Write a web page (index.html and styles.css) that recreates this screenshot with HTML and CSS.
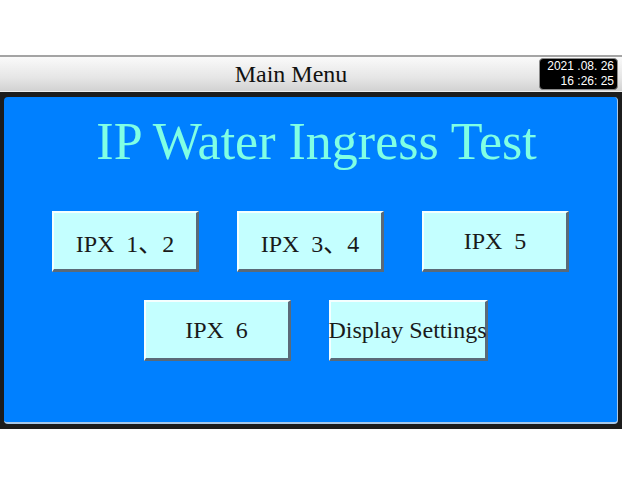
FILE: index.html
```html
<!DOCTYPE html>
<html>
<head>
<meta charset="utf-8">
<link rel="stylesheet" href="styles.css">
</head>
<body>
<div class="screen">
  <div class="topline"></div>
  <div class="header">
    <div class="title-bar">Main Menu</div>
    <div class="clock">
      <div>2021 .08. 26</div>
      <div>16 :26: 25</div>
    </div>
  </div>
  <div class="frame">
    <div class="panel">
      <h1 class="headline">IP Water Ingress Test</h1>
      <div class="row">
        <div class="btn">IPX 1、2</div>
        <div class="btn">IPX 3、4</div>
        <div class="btn">IPX 5</div>
      </div>
      <div class="row row2">
        <div class="btn">IPX 6</div>
        <div class="btn wide">Display Settings</div>
      </div>
    </div>
  </div>
</div>
</body>
</html>
```

FILE: styles.css
```css
html, body {
  margin: 0;
  padding: 0;
  background: #ffffff;
}
body {
  width: 622px;
  height: 484px;
  overflow: hidden;
  font-family: "Liberation Serif", "Noto Sans CJK SC", serif;
}
.screen {
  margin-top: 55px;
}
.topline {
  height: 2px;
  background: #a4a4a4;
}
.header {
  height: 34px;
  background: linear-gradient(#fafafa, #e6e6e6 60%, #d2d2d2);
  border-bottom: 1px solid #eeeeee;
  display: flex;
  align-items: center;
  position: relative;
}
.title-bar {
  flex: 1;
  text-align: center;
  padding-right: 40px;
  font-size: 24px;
  color: #111;
  line-height: 34px;
}
.clock {
  position: absolute;
  right: 4px;
  top: 1px;
  width: 72px;
  height: 30px;
  background: #000;
  border: 1px solid #8a8a8a;
  border-radius: 4px;
  color: #fff;
  font-family: "Liberation Sans", Arial, sans-serif;
  font-size: 12px;
  line-height: 15px;
  text-align: right;
  padding: 0 3px 0 2px;
  box-sizing: content-box;
}
.frame {
  background: #1c1c1c;
  padding: 5px 4px 5px 4px;
}
.panel {
  height: 327px;
  background: #0080ff;
  border-radius: 4px;
  border-right: 1px solid #a8c8e8;
  border-bottom: 2px solid #a8c8e8;
  box-sizing: border-box;
  display: flex;
  flex-direction: column;
  align-items: center;
}
.headline {
  margin: 15px 0 0 0;
  padding-left: 12px;
  font-weight: normal;
  font-size: 52px;
  line-height: 60px;
  color: #80ffe4;
}
.row {
  display: flex;
  gap: 38px;
  margin-top: 39px;
}
.row2 {
  margin-top: 28px;
  padding-left: 10px;
}
.btn {
  width: 147px;
  height: 61px;
  box-sizing: border-box;
  background: #c4ffff;
  border-top: 2px solid #f4ffff;
  border-left: 2px solid #f4ffff;
  border-right: 3px solid #5a6a78;
  border-bottom: 3px solid #5a6a78;
  display: flex;
  align-items: center;
  justify-content: center;
  font-size: 24px;
  color: #1a1a1a;
  word-spacing: 6px;
}
.btn.wide {
  width: 159px;
  font-size: 24px;
  word-spacing: 0;
  white-space: nowrap;
}
```
